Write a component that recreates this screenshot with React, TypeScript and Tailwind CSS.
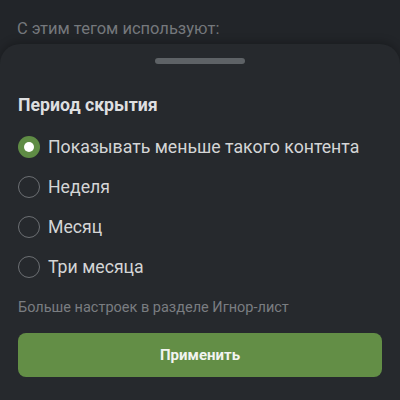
import React, { useState } from 'react'

const options = ['Показывать меньше такого контента', 'Неделя', 'Месяц', 'Три месяца']

export default function App() {
    const [selected, setSelected] = useState(0)

    return (
        <div className="w-[400px] h-[400px] overflow-hidden bg-[#222529] flex flex-col" style={{ fontFamily: 'Roboto, "Noto Sans", sans-serif' }}>
            <div className="h-[44px] shrink-0 px-[17px] pt-[17px] text-[16.5px] leading-[24px] text-[#75787c]">
                С этим тегом используют:
            </div>
            <div className="flex-1 bg-[#26292d] rounded-t-[20px] px-[18px] flex flex-col shadow-[0_-2px_8px_rgba(0,0,0,0.25)]">
                <div className="flex justify-center pt-[14px]">
                    <div className="w-[90px] h-[6px] rounded-full bg-[#5e6266]" />
                </div>
                <h3 className="mt-[29px] text-[17.7px] leading-[24px] font-bold text-[#dedfe0]">Период скрытия</h3>
                <div className="mt-[10px] flex flex-col">
                    {options.map((o, i) => (
                        <button
                            key={o}
                            onClick={() => setSelected(i)}
                            className="h-[40px] flex items-center gap-[8px] text-left"
                        >
                            {selected === i ? (
                                <span className="w-[22px] h-[22px] rounded-full bg-[#5f8c45] flex items-center justify-center">
                                    <span className="w-[10px] h-[10px] rounded-full bg-white" />
                                </span>
                            ) : (
                                <span className="w-[22px] h-[22px] rounded-full border-[1.5px] border-[#6c6f73]" />
                            )}
                            <span className="text-[17.7px] leading-[24px] text-[#d4d5d6]">{o}</span>
                        </button>
                    ))}
                </div>
                <p className="mt-[11px] text-[14.5px] leading-[20px] text-[#7a7d81]">Больше настроек в разделе Игнор-лист</p>
                <button className="mt-[15px] h-[44px] w-full rounded-[8px] bg-[#638e46] text-[15px] font-bold text-[#f2f4f0]">
                    Применить
                </button>
            </div>
        </div>
    )
}
